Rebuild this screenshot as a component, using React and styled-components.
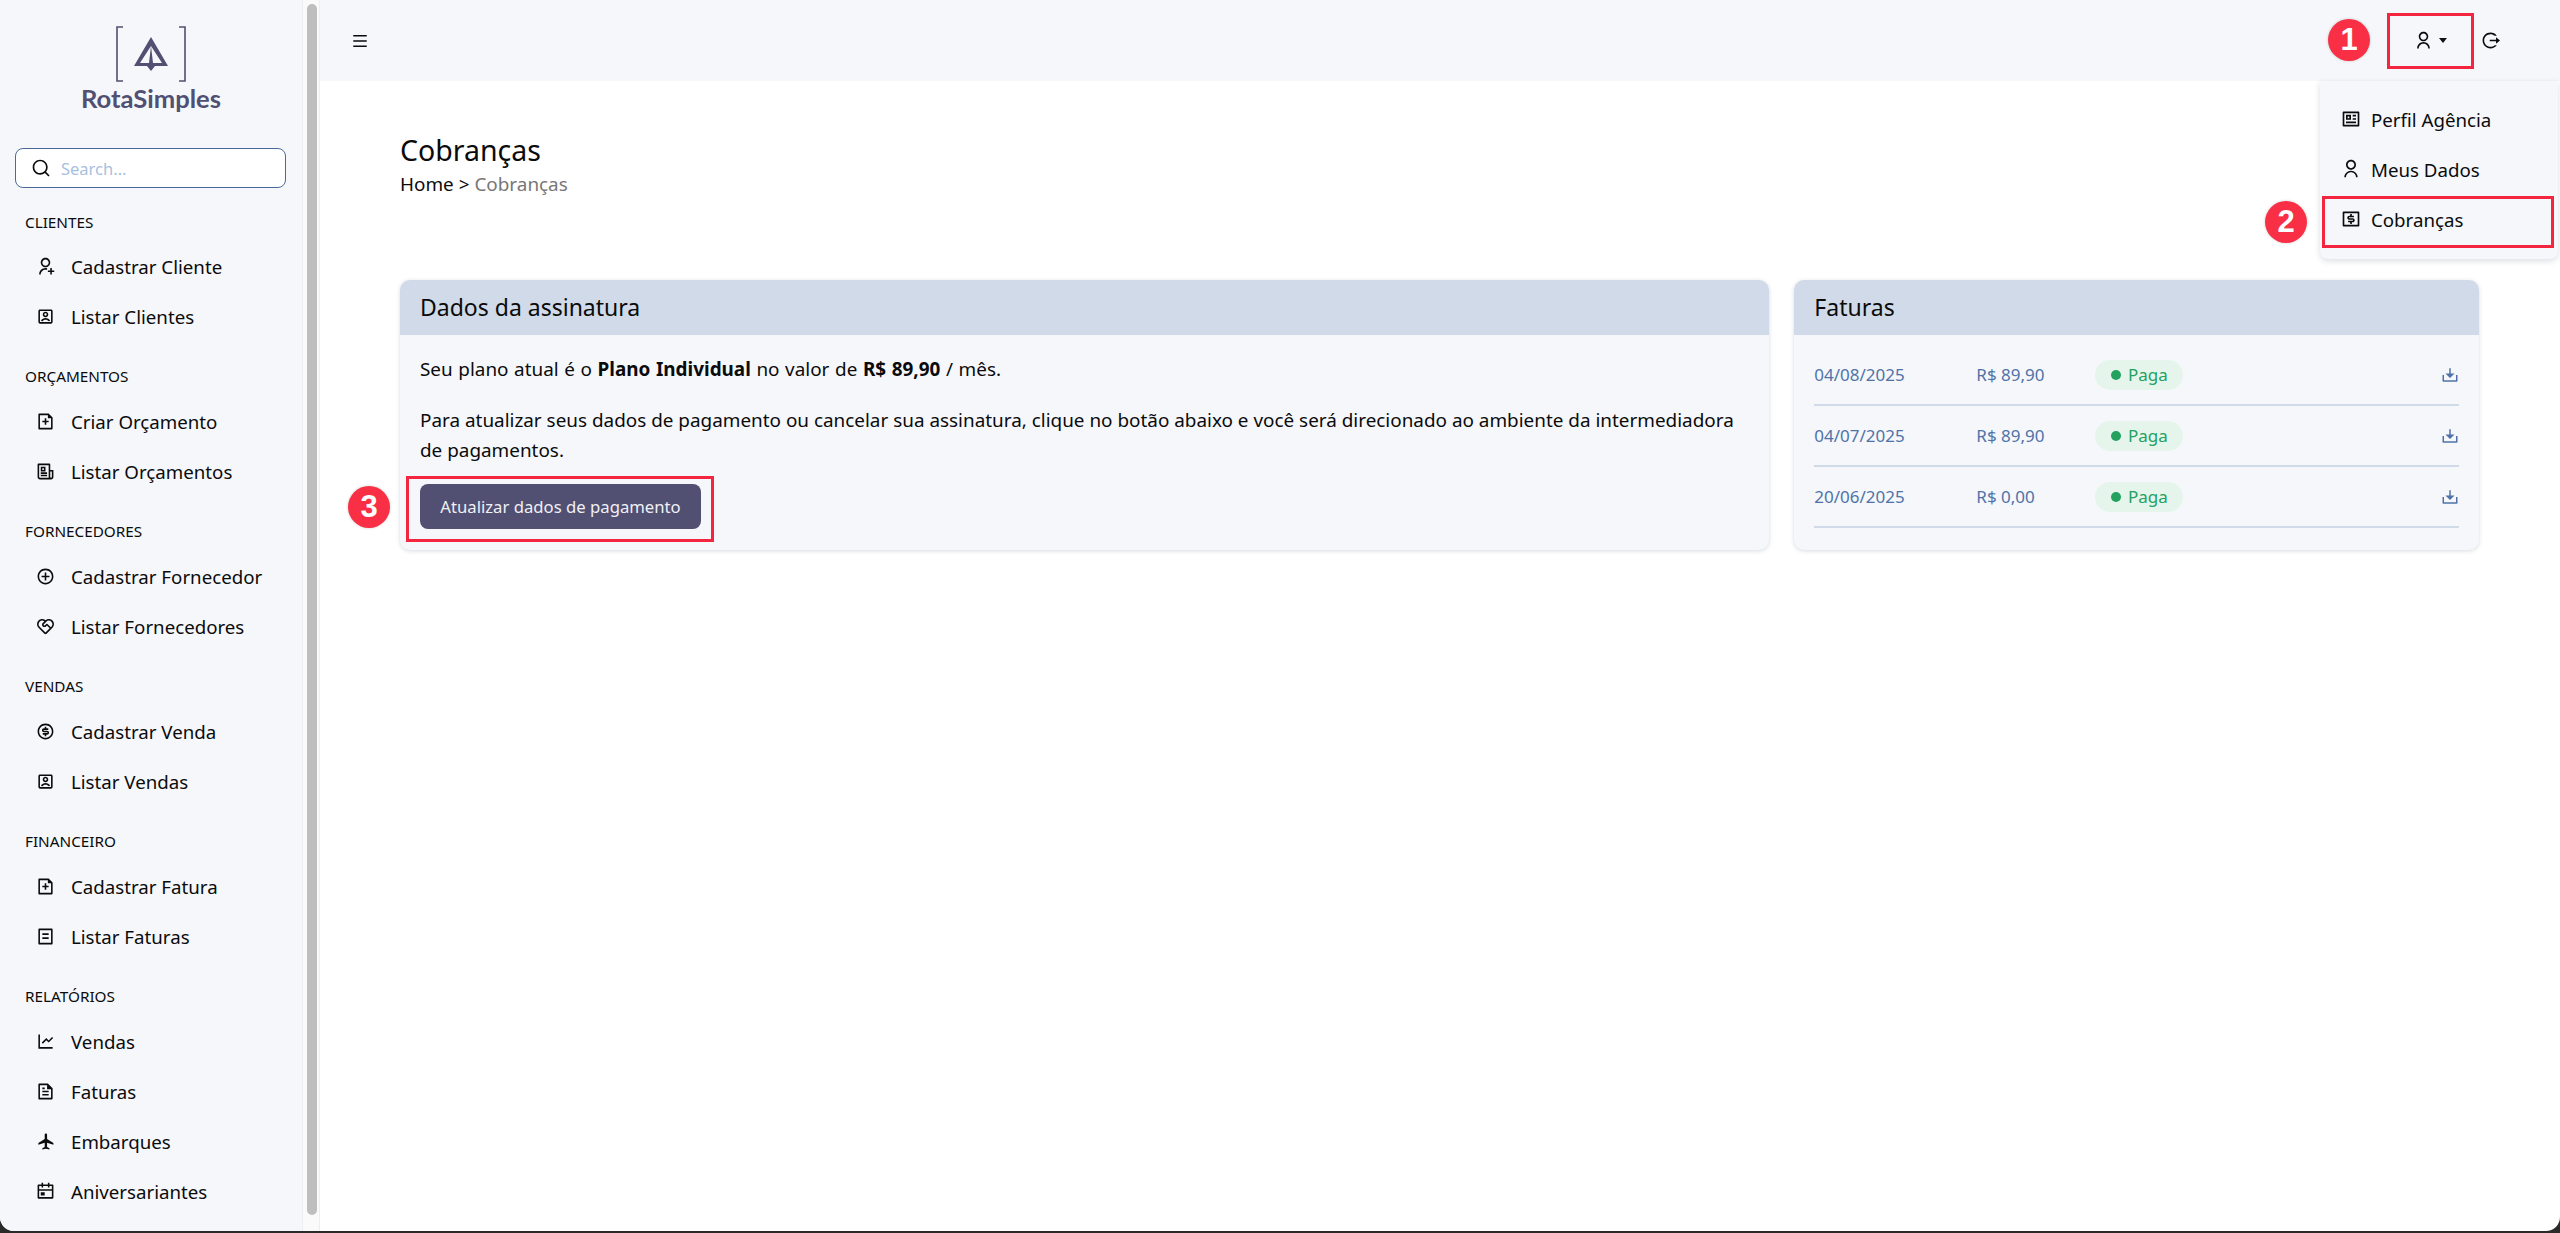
import React from "react";
import styled, { createGlobalStyle } from "styled-components";
import {
  RiUserAddLine, RiAccountBoxLine, RiFileAddLine, RiNewspaperLine, RiAddCircleLine, RiServiceLine,
  RiMoneyDollarCircleLine, RiLineChartLine, RiFileTextLine, RiPlaneFill, RiCalendarEventLine,
  RiSearchLine, RiMenuLine, RiUserLine, RiLogoutCircleRLine, RiProfileLine, RiMoneyDollarBoxLine, RiDownload2Line,
} from "react-icons/ri";

const Global = createGlobalStyle`
  html, body { margin: 0; padding: 0; height: 100%; background: #2a2a2a; }
  * { box-sizing: border-box; }
  body { font-family: "Noto Sans", "Open Sans", sans-serif; color: #0b0b0b; overflow: hidden; }
`;

const Frame = styled.div`
  position: relative; width: 2560px; height: 1231px; display: flex; background: #fff;
  border-radius: 0 0 14px 14px; overflow: hidden;
`;
const Sidebar = styled.aside`width: 302px; flex: none; background: #f5f7fb; display: flex; flex-direction: column;`;
const Logo = styled.div`height: 148px; flex: none; padding-top: 26px; display: flex; flex-direction: column; align-items: center; color: #514f72;`;
const LogoName = styled.div`font-family: "Lato", sans-serif; font-weight: 700; font-size: 25.6px; line-height: 30px; margin-top: 1px; letter-spacing: 0;`;
const Search = styled.div`
  flex: none; margin: 0 16px 0 15px; height: 40px; border: 1.5px solid #4a6a9e; border-radius: 8px; background: #fff;
  display: flex; align-items: center; gap: 10px; padding-left: 15px; font-size: 16.5px; color: #a9bfe0;
  svg { color: #0b0b0b; width: 20px; height: 20px; }
`;
const Group = styled.section`flex: none; display: flex; flex-direction: column;`;
const Label = styled.div`height: 20px; line-height: 20px; padding-left: 25px; font-size: 15.3px; margin: ${p => p.$first ? "24px 0 9px" : "25px 0 10px"};`;
const Item = styled.div`
  height: 50px; display: flex; align-items: center; padding-left: 36px; gap: 16px; font-size: 18.7px;
  svg { width: 19px; height: 19px; flex: none; }
`;
const Gutter = styled.div`width: 18px; flex: none; padding: 4px 4px 16px; background: #fafafa; border-left: 1px solid #eceef2; border-right: 1px solid #eceef2;`;
const Thumb = styled.div`width: 10px; height: 100%; border-radius: 5px; background: #bebebe;`;
const Main = styled.main`flex: 1; min-width: 0; display: flex; flex-direction: column;`;
const Topbar = styled.header`
  height: 81px; flex: none; background: #f5f7fb; display: flex; align-items: center; justify-content: space-between; padding: 0 60px 0 31px;
`;
const TopActions = styled.div`display: flex; align-items: center; gap: 34px;`;
const UserToggle = styled.div`display: flex; align-items: center; gap: 6px; svg { width: 19px; height: 19px; }`;
const Caret = styled.span`width: 0; height: 0; border-left: 4.5px solid transparent; border-right: 4.5px solid transparent; border-top: 5px solid #111;`;
const Content = styled.div`padding: 49px 81px 0 80px;`;
const Title = styled.h1`margin: 0; font-size: 28.5px; font-weight: 400; line-height: 40px;`;
const Crumbs = styled.div`font-size: 18.9px; line-height: 24px; margin: 2px 0 84px; span { color: #777; }`;
const Cards = styled.div`display: grid; grid-template-columns: 2fr 1fr; gap: 25px;`;
const Card = styled.section`height: 270px; background: #f5f7fb; border-radius: 10px; overflow: hidden; box-shadow: 0 1px 4px rgba(40,50,80,.18);`;
const CardHead = styled.h2`margin: 0; height: 55px; padding: 0 20px 2px; display: flex; align-items: center; background: #d0dae8; font-size: 23px; font-weight: 400;`;
const CardBody = styled.div`padding: 19px 20px 0; font-size: 18.9px; line-height: 30px;`;
const Lead = styled.p`margin: 0 0 21px; word-spacing: 0.7px;`;
const Notice = styled.p`margin: 0 0 19px;`;
const Button = styled.button`
  display: block; width: 281px; height: 45px; border: 0; border-radius: 8px; background: #514f72; color: #f0f0f5;
  font: 400 16.7px "Noto Sans", sans-serif;
`;
const Invoices = styled.div`padding: 10px 20px 0;`;
const Invoice = styled.div`
  height: 61px; display: flex; align-items: center; border-bottom: 2px solid #d0dae8; font-size: 17px; color: #4f73a8;
  svg { margin-left: auto; width: 18px; height: 18px; }
`;
const Cell = styled.span`width: ${p => p.$w}px; flex: none;`;
const Badge = styled.span`
  height: 30px; width: 88px; border-radius: 15px; background: #e6f5ec; color: #23a15f; display: flex; align-items: center; justify-content: center; gap: 7px;
  &::before { content: ""; width: 10px; height: 10px; border-radius: 50%; background: #23a15f; }
`;
const Menu = styled.div`
  position: absolute; left: 2320px; top: 81px; width: 238px; height: 178px; padding-top: 13px; background: #f5f7fb; border-radius: 0 0 8px 8px;
  box-shadow: 0 2px 6px rgba(40,50,80,.16); z-index: 2;
`;
const MenuItem = styled.div`
  height: 50px; display: flex; align-items: center; gap: 10px; padding-left: 21px; font-size: 18.7px;
  svg { width: 20px; height: 20px; }
`;
const Highlight = styled.div`
  position: absolute; left: ${p => p.$x}px; top: ${p => p.$y}px; width: ${p => p.$w}px; height: ${p => p.$h}px;
  border: 3px solid #f4263f; z-index: 3; pointer-events: none;
`;
const Step = styled.div`
  position: absolute; left: ${p => p.$x}px; top: ${p => p.$y}px; width: 42px; height: 42px; border-radius: 50%;
  background: #f92f45; color: #fff; font: 700 31px/42px "Liberation Sans", sans-serif; text-align: center; z-index: 3; box-shadow: 0 0 3px rgba(0,0,0,.2);
`;

const InvoiceListIcon = () => (
  <svg viewBox="0 0 24 24" fill="currentColor">
    <path d="M20 22H4a1 1 0 0 1-1-1V3a1 1 0 0 1 1-1h16a1 1 0 0 1 1 1v18a1 1 0 0 1-1 1Zm-1-2V4H5v16h14ZM8 8h8v2H8V8Zm0 5h8v2H8v-2Z" />
  </svg>
);

const nav = [
  ["CLIENTES", [[RiUserAddLine, "Cadastrar Cliente"], [RiAccountBoxLine, "Listar Clientes"]]],
  ["ORÇAMENTOS", [[RiFileAddLine, "Criar Orçamento"], [RiNewspaperLine, "Listar Orçamentos"]]],
  ["FORNECEDORES", [[RiAddCircleLine, "Cadastrar Fornecedor"], [RiServiceLine, "Listar Fornecedores"]]],
  ["VENDAS", [[RiMoneyDollarCircleLine, "Cadastrar Venda"], [RiAccountBoxLine, "Listar Vendas"]]],
  ["FINANCEIRO", [[RiFileAddLine, "Cadastrar Fatura"], [InvoiceListIcon, "Listar Faturas"]]],
  ["RELATÓRIOS", [[RiLineChartLine, "Vendas"], [RiFileTextLine, "Faturas"], [RiPlaneFill, "Embarques"], [RiCalendarEventLine, "Aniversariantes"]]],
];
const invoices = [["04/08/2025", "R$ 89,90"], ["04/07/2025", "R$ 89,90"], ["20/06/2025", "R$ 0,00"]];

const LogoMark = () => (
  <svg width="70" height="56" viewBox="0 0 70 56" fill="none">
    <path d="M7 1H1V55H7M63 1H69V55H63" stroke="#514f72" strokeWidth="1.6" />
    <path d="M35 11L18 40H31L35 45L39 40H52ZM35 20L24 37H33L35 20L37 37H46Z" fill="#514f72" fillRule="evenodd" />
  </svg>
);

export default function App() {
  return (
    <>
      <Global />
      <Frame>
        <Sidebar>
          <Logo>
            <LogoMark />
            <LogoName>RotaSimples</LogoName>
          </Logo>
          <Search><RiSearchLine />Search...</Search>
          {nav.map(([label, items], i) => (
            <Group key={label}>
              <Label $first={i === 0}>{label}</Label>
              {items.map(([Icon, text]) => <Item key={text}><Icon />{text}</Item>)}
            </Group>
          ))}
        </Sidebar>
        <Gutter><Thumb /></Gutter>
        <Main>
          <Topbar>
            <RiMenuLine size={18} />
            <TopActions>
              <UserToggle><RiUserLine /><Caret /></UserToggle>
              <RiLogoutCircleRLine size={19} />
            </TopActions>
          </Topbar>
          <Content>
            <Title>Cobranças</Title>
            <Crumbs>Home &gt; <span>Cobranças</span></Crumbs>
            <Cards>
              <Card>
                <CardHead>Dados da assinatura</CardHead>
                <CardBody>
                  <Lead>Seu plano atual é o <b>Plano Individual</b> no valor de <b>R$ 89,90</b> / mês.</Lead>
                  <Notice>Para atualizar seus dados de pagamento ou cancelar sua assinatura, clique no botão abaixo e você será direcionado ao ambiente da intermediadora de pagamentos.</Notice>
                  <Button>Atualizar dados de pagamento</Button>
                </CardBody>
              </Card>
              <Card>
                <CardHead>Faturas</CardHead>
                <Invoices>
                  {invoices.map(([d, v], i) => (
                    <Invoice key={i}><Cell $w={162}>{d}</Cell><Cell $w={119}>{v}</Cell><Badge>Paga</Badge><RiDownload2Line /></Invoice>
                  ))}
                </Invoices>
              </Card>
            </Cards>
          </Content>
        </Main>
        <Menu>
          <MenuItem><RiProfileLine />Perfil Agência</MenuItem>
          <MenuItem><RiUserLine />Meus Dados</MenuItem>
          <MenuItem><RiMoneyDollarBoxLine />Cobranças</MenuItem>
        </Menu>
        <Highlight $x={2387} $y={13} $w={87} $h={56} />
        <Highlight $x={2322} $y={196} $w={232} $h={52} />
        <Highlight $x={406} $y={476} $w={308} $h={66} />
        <Step $x={2328} $y={19}>1</Step>
        <Step $x={2265} $y={201}>2</Step>
        <Step $x={348} $y={486}>3</Step>
      </Frame>
    </>
  );
}
